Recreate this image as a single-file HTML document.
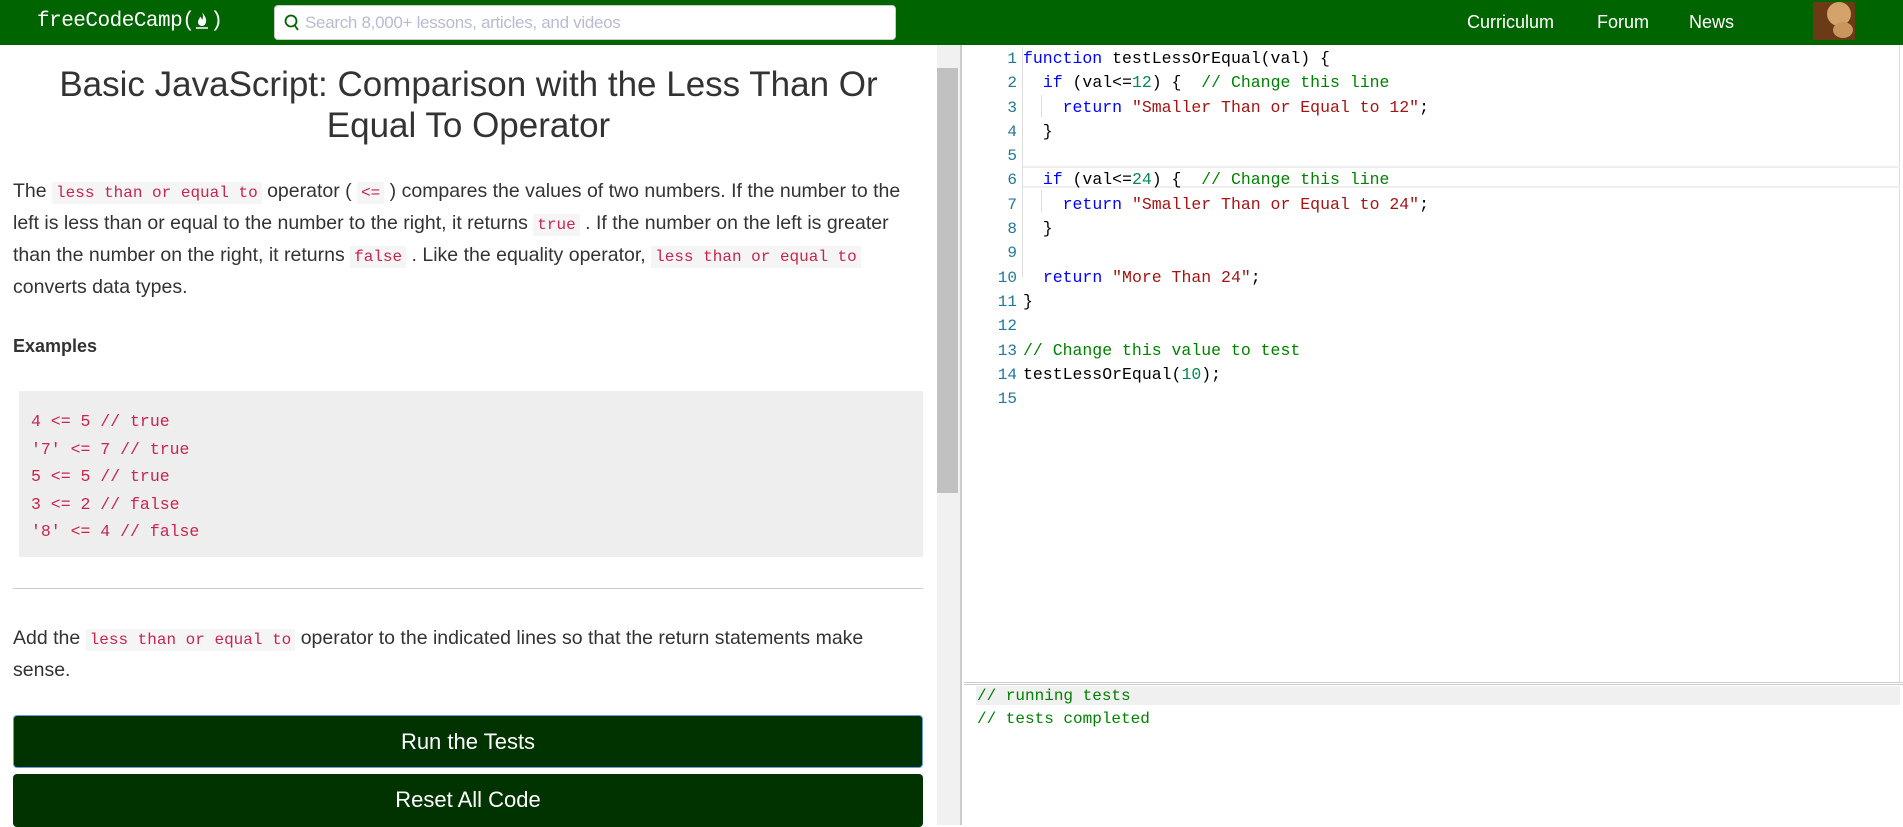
<!DOCTYPE html>
<html><head><meta charset="utf-8"><style>
*{box-sizing:border-box;margin:0;padding:0}
body{width:1903px;height:825px;overflow:hidden;background:#fff;font-family:"Liberation Sans",sans-serif;color:#333;position:relative}
.hdr{position:absolute;left:0;top:0;width:1903px;height:45px;background:#006400}
.logo{position:absolute;left:37px;top:9px;color:#fff;font-family:"Liberation Mono",monospace;font-size:21px;letter-spacing:-0.5px;white-space:nowrap}
.search{position:absolute;left:274px;top:5px;width:622px;height:35px;background:#fff;border-radius:4px;border:1px solid #ccc}
.search span{position:absolute;left:30px;top:7px;color:#b8bcd0;font-size:17px;letter-spacing:-0.3px}
.nav{position:absolute;top:12px;color:#fff;font-size:18px}
.av{position:absolute;left:1813px;top:2px;width:42px;height:38px;background:#6b3a16}
.av i{position:absolute;left:14px;top:0;width:24px;height:24px;border-radius:50%;background:#d4a36b}
.av b{position:absolute;left:20px;top:20px;width:20px;height:16px;border-radius:50%;background:#c9975e}
h1{position:absolute;left:0;top:64px;width:937px;text-align:center;font-weight:normal;font-size:35px;line-height:41px;color:#333}
.p{position:absolute;left:13px;width:930px;font-size:19.5px;line-height:32px;color:#333;white-space:nowrap}
code{font-family:"Liberation Mono",monospace;font-size:16px;line-height:1;color:#c7254e;background:#f5f5f5;padding:2px 4px;letter-spacing:0}
.ex{position:absolute;left:13px;top:336px;font-weight:bold;font-size:18px}
pre{position:absolute;left:19px;top:391px;width:904px;height:166px;background:#eee;padding:17px 12px;font-family:"Liberation Mono",monospace;font-size:16.5px;line-height:27.5px;color:#c7254e}
hr{position:absolute;left:13px;top:588px;width:910px;border:0;border-top:1px solid #ccc}
.btn{position:absolute;left:13px;width:910px;height:53px;background:#003300;color:#fff;text-align:center;font-size:22px;line-height:52px;border-radius:4px}
.sb{position:absolute;left:937px;top:45px;width:25px;height:780px;background:#f1f1f1;border-right:2px solid #ccc}
.sb i{position:absolute;left:0;top:23px;width:21px;height:425px;background:#c1c1c1}
.ed{position:absolute;left:964px;top:45px;width:936px;height:637px;border-right:1px solid #ddd}
.ln{position:absolute;left:964px;width:53px;text-align:right;color:#237893;font-family:"Liberation Mono",monospace;font-size:16px}
.cd{position:absolute;left:1023px;font-family:"Liberation Mono",monospace;font-size:16.5px;color:#000;white-space:pre}
.k{color:#0000ff}.s{color:#a31515}.n{color:#098658}.c{color:#008000}
.out{position:absolute;left:964px;top:682px;width:939px;height:143px;border-top:3px double #ccc}
.o{position:absolute;left:977px;font-family:"Liberation Mono",monospace;font-size:16px;color:#008000;white-space:pre}
</style></head><body>
<div class="hdr">
<div class="logo">freeCodeCamp(<svg width="16" height="20" viewBox="0 0 16 20" style="vertical-align:-3px"><path d="M8 2 C9 6 13 8 12 13 C11.5 16 9.5 17 8 17 C6 17 4 15.5 4 13 C4 10.5 6 9.5 6 7.5 C7.5 9 8 10 8 11 C9.5 9 9 5 8 2Z" fill="#fff"/><path d="M2 19 H14" stroke="#fff" stroke-width="1.5"/></svg>)</div>
<div class="search"><svg style="position:absolute;left:9px;top:8px" width="16" height="18" viewBox="0 0 16 18"><circle cx="7" cy="7" r="5.5" fill="none" stroke="#006400" stroke-width="1.8"/><path d="M10.5 11 L14 16" stroke="#006400" stroke-width="1.8"/></svg><span>Search 8,000+ lessons, articles, and videos</span></div>
<div class="nav" style="left:1467px">Curriculum</div>
<div class="nav" style="left:1597px">Forum</div>
<div class="nav" style="left:1689px">News</div>
<div class="av"><i></i><b></b></div>
</div>
<h1>Basic JavaScript: Comparison with the Less Than Or<br>Equal To Operator</h1>
<div class="p" style="top:175px">The <code>less than or equal to</code> operator ( <code>&lt;=</code> ) compares the values of two numbers. If the number to the<br>left is less than or equal to the number to the right, it returns <code>true</code> . If the number on the left is greater<br>than the number on the right, it returns <code>false</code> . Like the equality operator, <code>less than or equal to</code><br>converts data types.</div>
<div class="ex">Examples</div>
<pre>4 &lt;= 5 // true
'7' &lt;= 7 // true
5 &lt;= 5 // true
3 &lt;= 2 // false
'8' &lt;= 4 // false</pre>
<hr>
<div class="p" style="top:622px">Add the <code>less than or equal to</code> operator to the indicated lines so that the return statements make<br>sense.</div>
<div class="btn" style="top:715px;border:1px solid #6a9be8">Run the Tests</div>
<div class="btn" style="top:774px">Reset All Code</div>
<div class="sb"><i></i></div>
<div class="ed"></div>
<div style="position:absolute;left:1023px;top:166px;width:877px;height:22px;border-top:2px solid #eee;border-bottom:2px solid #eee"></div>
<div style="position:absolute;left:1022px;top:47px;width:1px;height:230px;background:#ddd"></div>
<div style="position:absolute;left:1041px;top:95px;width:1px;height:22px;background:#ddd"></div>
<div style="position:absolute;left:1041px;top:190px;width:1px;height:22px;background:#ddd"></div>
<div class="ln" style="top:47px;line-height:24.3px">1<br>2<br>3<br>4<br>5<br>6<br>7<br>8<br>9<br>10<br>11<br>12<br>13<br>14<br>15</div>
<div class="cd" style="top:47px;line-height:24.3px"><span class="k">function</span> testLessOrEqual(val) {
  <span class="k">if</span> (val&lt;=<span class="n">12</span>) {  <span class="c">// Change this line</span>
    <span class="k">return</span> <span class="s">"Smaller Than or Equal to 12"</span>;
  }

  <span class="k">if</span> (val&lt;=<span class="n">24</span>) {  <span class="c">// Change this line</span>
    <span class="k">return</span> <span class="s">"Smaller Than or Equal to 24"</span>;
  }

  <span class="k">return</span> <span class="s">"More Than 24"</span>;
}

<span class="c">// Change this value to test</span>
testLessOrEqual(<span class="n">10</span>);
</div>
<div class="out"></div>
<div style="position:absolute;left:976px;top:686px;width:924px;height:19px;background:#f0f0f0"></div>
<div class="o" style="top:685px;line-height:23px">// running tests
// tests completed</div>
</body></html>
